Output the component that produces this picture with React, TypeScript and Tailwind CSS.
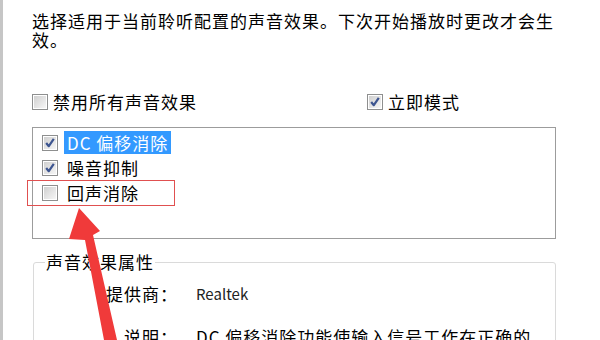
import React from "react";

function Check({ checked }: { checked?: boolean }) {
  return (
    <span className="relative flex h-[16px] w-[16px] shrink-0 items-center justify-center border border-[#8e8f8f] bg-white">
      <span className="absolute inset-[1px] bg-gradient-to-br from-[#d0d0d0] to-[#f6f6f6]" />
      {checked ? (
        <svg viewBox="0 0 14 14" className="relative h-[14px] w-[14px]">
          <path
            d="M3.2 7 L5.8 10.2 L10.8 2.8"
            fill="none"
            stroke="#3d5590"
            strokeWidth="2.2"
            strokeLinejoin="round"
          />
        </svg>
      ) : null}
    </span>
  );
}

const ITEMS = [
  { label: "DC 偏移消除", checked: true, selected: true },
  { label: "噪音抑制", checked: true },
  { label: "回声消除", checked: false },
];

export default function App() {
  return (
    <div className="relative h-[340px] w-[600px] overflow-hidden border-l-[3px] border-[#c6c6c6] bg-white font-['Noto_Sans_CJK_SC',sans-serif] text-[17px] tracking-[1px] text-black">
      <div className="pl-[29px] pt-[11px]">
        <p className="w-[530px] leading-[19px]">
          选择适用于当前聆听配置的声音效果。下次开始播放时更改才会生效。
        </p>

        <div className="mt-[43px] flex h-[20px] items-center">
          <div className="flex w-[335px] items-center gap-[5px]">
            <Check />
            <span>禁用所有声音效果</span>
          </div>
          <div className="flex items-center gap-[5px]">
            <Check checked />
            <span>立即模式</span>
          </div>
        </div>

        <div className="mt-[15px] h-[112px] w-[524px] border border-[#9c9c9c] pl-[9px] pt-[2px]">
          {ITEMS.map((it) => (
            <div key={it.label} className="flex h-[25px] items-center">
              <Check checked={it.checked} />
              <span
                className={
                  it.selected
                    ? "ml-[6px] flex h-[23px] items-center bg-[#3399ff] px-[3px] text-white"
                    : "ml-[6px] px-[3px]"
                }
              >
                {it.label}
              </span>
            </div>
          ))}
        </div>

        <div className="relative ml-[1px] mt-[23px] h-[120px] w-[523px] rounded-[3px] border border-[#dadada] pt-[21px]">
          <span className="absolute left-[11px] top-[-11px] bg-white px-[1px] leading-[20px]">
            声音效果属性
          </span>
          <div className="grid grid-cols-[144px_1fr] gap-x-[18px] gap-y-[23px] leading-[20px]">
            <span className="text-right">提供商：</span>
            <span className="text-[15px] tracking-normal text-[#222]">Realtek</span>
            <span className="text-right">说明：</span>
            <span>DC 偏移消除功能使输入信号工作在正确的</span>
          </div>
        </div>
      </div>

      <div className="absolute left-[24px] top-[180px] h-[26px] w-[148px] border-[1.5px] border-[#e05050]" />

      <svg
        className="pointer-events-none absolute left-[-3px] top-0"
        width="600"
        height="340"
        viewBox="0 0 600 340"
      >
        <polygon
          points="79,208 100,231 93,235 117,340 104,340 85,240 69,239"
          fill="#f03a3a"
        />
      </svg>
    </div>
  );
}
